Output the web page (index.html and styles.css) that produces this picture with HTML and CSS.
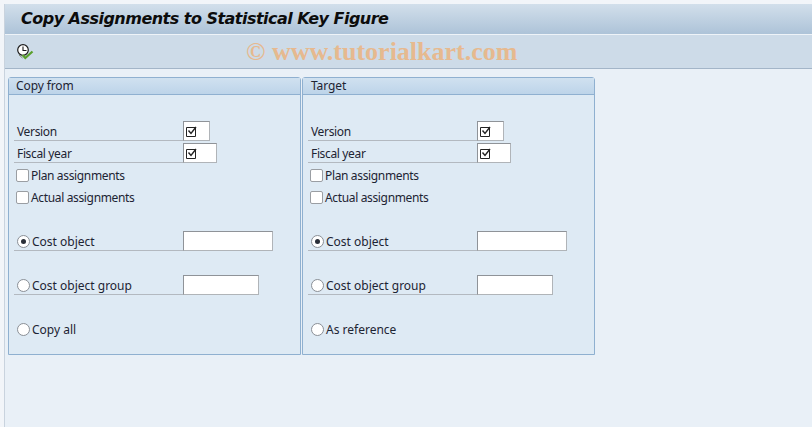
FILE: index.html
```html
<!DOCTYPE html>
<html lang="en">
<head>
<meta charset="utf-8">
<title>Copy Assignments to Statistical Key Figure</title>
<link rel="stylesheet" href="styles.css">
</head>
<body>
<div class="app">
  <header class="title-bar"><h1>Copy Assignments to Statistical Key Figure</h1></header>
  <div class="toolbar">
    <svg class="exec-icon" width="17" height="16" viewBox="0 0 17 16" aria-hidden="true">
      <circle cx="6" cy="6" r="5.3" fill="#fff" stroke="#1c1c1c" stroke-width="1.2"/>
      <path d="M6 2.5V6.5H9.5" fill="none" stroke="#1c1c1c" stroke-width="1.1"/>
      <path d="M2 11l3.5 3" fill="none" stroke="#7d8a78" stroke-width="1"/>
      <path d="M5.5 11l2.8 3L15.5 7.5" fill="none" stroke="#5aa02c" stroke-width="2.3"/>
    </svg>
    <span class="watermark">© www.tutorialkart.com</span>
  </div>
  <main class="panels">
    <section class="panel">
      <h2 class="panel-head">Copy from</h2>
      <div class="rows">
        <div class="row"><span class="label underlined">Version</span><span class="field w26"><svg class="tick" viewBox="0 0 11 11"><path d="M.5 1.5h9v9h-9z" fill="none" stroke="#222"/><path d="M2.5 4.5l2.5 3 5-6.5" fill="none" stroke="#222" stroke-width="1.4"/></svg></span></div>
        <div class="row"><span class="label underlined">Fiscal year</span><span class="field w33"><svg class="tick" viewBox="0 0 11 11"><path d="M.5 1.5h9v9h-9z" fill="none" stroke="#222"/><path d="M2.5 4.5l2.5 3 5-6.5" fill="none" stroke="#222" stroke-width="1.4"/></svg></span></div>
        <div class="row"><span class="check"></span><span class="text">Plan assignments</span></div>
        <div class="row"><span class="check"></span><span class="text">Actual assignments</span></div>
        <div class="row"></div>
        <div class="row"><span class="label underlined radio-label"><span class="radio on"></span><span class="text">Cost object</span></span><span class="field w90"></span></div>
        <div class="row"></div>
        <div class="row"><span class="label underlined radio-label"><span class="radio"></span><span class="text">Cost object group</span></span><span class="field w76"></span></div>
        <div class="row"></div>
        <div class="row"><span class="label radio-label"><span class="radio"></span><span class="text">Copy all</span></span></div>
      </div>
    </section>
    <section class="panel">
      <h2 class="panel-head head-wide">Target</h2>
      <div class="rows">
        <div class="row"><span class="label underlined">Version</span><span class="field w26"><svg class="tick" viewBox="0 0 11 11"><path d="M.5 1.5h9v9h-9z" fill="none" stroke="#222"/><path d="M2.5 4.5l2.5 3 5-6.5" fill="none" stroke="#222" stroke-width="1.4"/></svg></span></div>
        <div class="row"><span class="label underlined">Fiscal year</span><span class="field w33"><svg class="tick" viewBox="0 0 11 11"><path d="M.5 1.5h9v9h-9z" fill="none" stroke="#222"/><path d="M2.5 4.5l2.5 3 5-6.5" fill="none" stroke="#222" stroke-width="1.4"/></svg></span></div>
        <div class="row"><span class="check"></span><span class="text">Plan assignments</span></div>
        <div class="row"><span class="check"></span><span class="text">Actual assignments</span></div>
        <div class="row"></div>
        <div class="row"><span class="label underlined radio-label"><span class="radio on"></span><span class="text">Cost object</span></span><span class="field w90"></span></div>
        <div class="row"></div>
        <div class="row"><span class="label underlined radio-label"><span class="radio"></span><span class="text">Cost object group</span></span><span class="field w76"></span></div>
        <div class="row"></div>
        <div class="row"><span class="label radio-label"><span class="radio"></span><span class="text">As reference</span></span></div>
      </div>
    </section>
  </main>
</div>
</body>
</html>
```
FILE: styles.css
```css
* { box-sizing: border-box; }
html, body { margin: 0; height: 100%; }
body {
  background: #f2f5f9;
  font-family: "Noto Sans", "Open Sans", sans-serif;
  font-size: 12px;
  letter-spacing: -.35px;
  color: #1d2433;
  overflow: hidden;
}
.app {
  margin: 4px 0 0 4px;
  height: 423px;
  background: #e9f0f7;
  border-left: 1px solid #c9d3de;
}
.title-bar {
  height: 31px;
  padding: 0 0 2px 16px;
  display: flex;
  align-items: center;
  background: linear-gradient(#d2dfeb, #adc3d8);
  border-bottom: 1px solid #eef3f8;
}
.title-bar h1 {
  margin: 0;
  font: italic bold 16px "DejaVu Sans", sans-serif;
  letter-spacing: -.52px;
  color: #0c0c0c;
}
.toolbar {
  height: 34px;
  display: flex;
  align-items: center;
  padding-left: 12px;
  background: #cddbe8;
  border-bottom: 1px solid #a3b5c8;
  position: relative;
}
.watermark {
  position: absolute;
  left: 241px;
  top: 2px;
  font: bold 26px "Liberation Serif", serif;
  letter-spacing: 0;
  color: #e6b98f;
  white-space: nowrap;
}
.panels {
  display: flex;
  gap: 1px;
  padding: 8px 0 0 3px;
}
.panel {
  width: 293px;
  height: 278px;
  background: #deeaf4;
  border: 1px solid #8fb0d0;
  border-radius: 3px 3px 0 0;
}
.panel-head {
  margin: 0;
  height: 17px;
  line-height: 15px;
  padding-left: 7px;
  font-size: 12px;
  letter-spacing: -.1px;
  font-weight: 400;
  background: linear-gradient(#d0e1f0, #bdd4e9);
  border-bottom: 1px solid #8fb0d0;
}
.head-wide { padding-left: 8px; }
.rows {
  display: grid;
  grid-auto-rows: 22px;
  padding: 25px 0 0 5px;
}
.row { display: flex; align-items: center; position: relative; }
.label {
  display: flex;
  align-items: center;
  align-self: flex-start;
  height: 21px;
  padding: 2px 0 0 3px;
}
.underlined { width: 169px; border-bottom: 1px solid #b3b9c0; }
.field {
  position: absolute;
  left: 169px;
  top: 1px;
  height: 20px;
  background: #fff;
  border: 1px solid #b0b4b8;
  border-top-color: #8f9398;
  border-left-color: #8f9398;
  display: flex;
  align-items: center;
  padding-left: 2px;
}
.w26 { width: 27px; }
.w33 { width: 34px; }
.w90 { width: 90px; }
.w76 { width: 76px; }
.tick { width: 11px; height: 11px; }
.check {
  width: 13px;
  height: 13px;
  margin: 0 2px 0 2px;
  background: #fff;
  border: 1px solid #9a9ea3;
  border-radius: 2px;
}
.radio-label { letter-spacing: 0; }
.radio {
  width: 13px;
  height: 13px;
  margin-right: 2px;
  flex: none;
  border-radius: 50%;
  background: #fff;
  border: 1px solid #8a8f96;
  display: flex;
  align-items: center;
  justify-content: center;
}
.radio.on::after {
  content: "";
  width: 5px;
  height: 5px;
  border-radius: 50%;
  background: #2a2f38;
}
.text { white-space: nowrap; }
```
